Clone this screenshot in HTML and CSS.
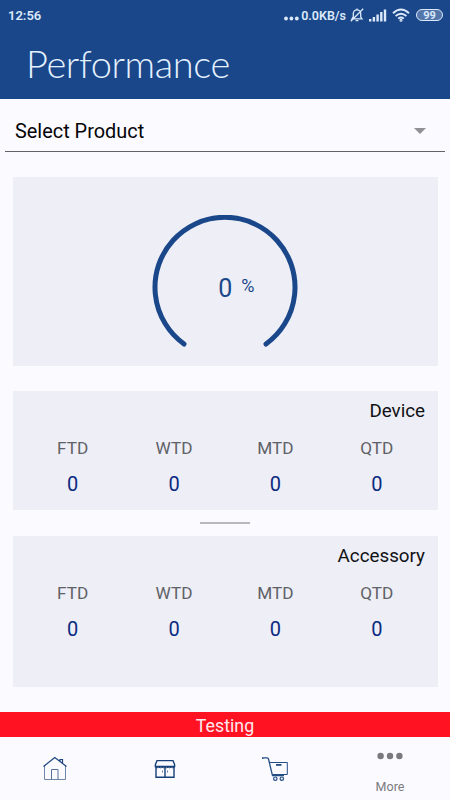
FILE: index.html
```html
<!DOCTYPE html>
<html lang="en">
<head>
<meta charset="utf-8">
<title>Performance</title>
<link rel="stylesheet" href="styles.css">
</head>
<body>
<div class="app">
  <header class="header">
    <div class="status">
      <span class="clock">12:56</span>
      <div class="status-right">
        <svg class="dots" width="15" height="14" viewBox="0 0 15 14" fill="#dce9fa"><circle cx="2" cy="9.500" r="1.900"/><circle cx="7.400" cy="9.500" r="1.900"/><circle cx="12.800" cy="9.500" r="1.900"/></svg>
        <span class="speed">0.0KB/s</span>
        <svg class="bell" width="14" height="14" viewBox="0 0 14 14" fill="none" stroke="#dce9fa" stroke-width="1.300"><path d="M2 10.800h10l-1.300-2V5.600C10.700 3.200 9.200 1.900 7 1.900S3.300 3.200 3.300 5.600v3.200zM7 .6v1.300M5.600 12.600h2.800M.8 13.200L13.200.8"/></svg>
        <svg class="signal" width="18" height="13" viewBox="0 0 18 13" fill="#dce9fa"><path d="M0 10h2.400v2.500H0zM3.700 8h2.400v4.500H3.700zM7.400 5.500h2.400v7H7.400zM11.100 3h2.400v9.500h-2.400zM14.800.5h2.400v12h-2.400z"/></svg>
        <svg class="wifi" width="18" height="14" viewBox="0 0 18 14" fill="none" stroke="#dce9fa" stroke-width="1.900"><path d="M1 5.200Q9-2 17 5.200M3.600 8Q9 3.300 14.400 8M6.200 10.600Q9 8.200 11.800 10.600"/><circle cx="9" cy="12.300" r=".6"/></svg>
        <span class="battery">99</span>
      </div>
    </div>
    <h1 class="title">Performance</h1>
  </header>

  <div class="select">
    <span>Select Product</span>
    <svg width="12" height="6" viewBox="0 0 12 6"><path d="M0 0h12L6 6z" fill="#919195"/></svg>
  </div>

  <section class="card gauge">
    <svg class="arc" width="146" height="136" viewBox="0 0 146 136"><path d="M32 129A70 70 0 1 1 114 129" fill="none" stroke="#1a4789" stroke-width="5" stroke-linecap="round"/></svg>
    <div class="reading"><span class="value">0</span><span class="unit">%</span></div>
  </section>

  <section class="card device">
    <h2>Device</h2>
    <div class="stats">
      <div class="stat"><span>FTD</span><b>0</b></div>
      <div class="stat"><span>WTD</span><b>0</b></div>
      <div class="stat"><span>MTD</span><b>0</b></div>
      <div class="stat"><span>QTD</span><b>0</b></div>
    </div>
  </section>

  <div class="divider"></div>

  <section class="card accessory">
    <h2>Accessory</h2>
    <div class="stats">
      <div class="stat"><span>FTD</span><b>0</b></div>
      <div class="stat"><span>WTD</span><b>0</b></div>
      <div class="stat"><span>MTD</span><b>0</b></div>
      <div class="stat"><span>QTD</span><b>0</b></div>
    </div>
  </section>

  <div class="banner">Testing</div>

  <nav class="nav">
    <a class="tab"><svg width="26" height="26" viewBox="0 0 26 26" fill="none"><path d="M2.500 9.500V23.500H23.500V9.500" stroke="#6f87a8"/><path d="M9.500 23.500V13.500h6.500V23.500" stroke="#52719b"/><path d="M1.500 10.500L12.800 1.500 24.500 10.500M18 5V3.500h2.500V7" stroke="#1c457f" stroke-width="1.200"/></svg></a>
    <a class="tab"><svg width="26" height="26" viewBox="0 0 26 26" fill="none" stroke="#153f78" stroke-width="1.400"><path d="M5 4.600H21L22.600 8.600V10.500H3.400V8.600zM4 11V21.200H22V11M13 11.500V21"/><path d="M3.600 11.200q1.600 1.300 3.100 0q1.600 1.300 3.200 0q1.500 1.300 3.100 0q1.600 1.300 3.100 0q1.600 1.300 3.200 0q1.500 1.300 3.100 0" stroke-width="1"/><path d="M10.500 14.500v2M15.500 14.500v2" stroke-width="1" opacity=".65"/></svg></a>
    <a class="tab"><svg width="28" height="26" viewBox="0 0 28 26" fill="none" stroke="#244d83"><path d="M1.700 3V1.800H6.300Q7.200 1.800 7.500 3L11.500 19.700H23" stroke-width="1.300"/><path d="M8.800 6.500H26.300V18.500H11.500" stroke-width="1"/><path d="M15 8.900h5.500" stroke-width="1.800"/><circle cx="14.300" cy="22.700" r="1.700" stroke-width="1.200"/><circle cx="20.800" cy="22.700" r="1.700" stroke-width="1.200"/></svg></a>
    <a class="tab more"><svg width="26" height="8" viewBox="0 0 26 8" fill="#7a7a7e"><circle cx="3.600" cy="4" r="3.200"/><circle cx="13" cy="4" r="3.200"/><circle cx="22.400" cy="4" r="3.200"/></svg><span>More</span></a>
  </nav>
</div>
</body>
</html>
```

FILE: styles.css
```css
* { box-sizing: border-box; }
body { margin: 0; font-family: Roboto, sans-serif; background: #fbfaff; }
.app { width: 450px; height: 800px; display: flex; flex-direction: column; overflow: hidden; }
.header { height: 99px; flex: none; background: #1a4789; color: #e4f1ff; }
.status { height: 30px; display: flex; align-items: center; justify-content: space-between; padding: 0 7px 0 8px; color: #dce9fa; }
.clock { font-size: 13px; font-weight: 600; line-height: 30px; padding-top: 2px; }
.status-right { display: flex; align-items: center; }
.dots { margin-top: 2px; margin-right: 2px; }
.speed { font-size: 12.5px; font-weight: 600; }
.bell { margin-left: 4px; }
.signal { margin-left: 5px; }
.wifi { margin-left: 5px; }
.battery { width: 27px; height: 12px; margin-left: 6px; border: 1px solid #dce9fa; border-radius: 6px; background: #5377aa; font-size: 11px; line-height: 11px; font-weight: 700; text-align: center; }
.title { margin: 0; padding-left: 26px; font: 300 38px/66px Lato, sans-serif; letter-spacing: -0.38px; }
.select { height: 53px; flex: none; margin: 0 5px; padding: 12px 19px 0 10px; display: flex; justify-content: space-between; align-items: center; border-bottom: 1px solid #626267; font-size: 19.9px; line-height: 24px; color: #050507; }
.select span { padding-top: 2px; }
.card { flex: none; margin: 0 12.5px 0 13px; background: #edeef6; }
.gauge { height: 189px; margin-top: 25px; padding-top: 38px; display: grid; justify-items: center; align-items: start; color: #1a4789; }
.arc, .reading { grid-area: 1 / 1; }
.reading { display: flex; align-items: flex-start; gap: 9px; padding: 58px 0 0 22px; }
.value { font-size: 25px; line-height: 31px; }
.unit { font-size: 18px; line-height: 25px; }
.device { height: 119px; margin-top: 25px; }
.accessory { height: 151px; }
.card h2 { margin: 0; padding: 8px 12.5px 0 0; text-align: right; font-size: 18.8px; line-height: 25px; font-weight: 400; color: #111114; }
.stats { display: grid; grid-template-columns: repeat(4, 1fr); padding: 12px 10px 0 9px; }
.stat { display: flex; flex-direction: column; align-items: center; gap: 12px; }
.stat span { font-size: 17.2px; line-height: 24px; color: #606166; }
.stat b { font-size: 20px; line-height: 24px; font-weight: 400; color: #0a2a80; }
.divider { width: 50px; height: 2px; flex: none; margin: 12px auto; background: #b8b8be; }
.banner { height: 25px; flex: none; margin-top: 25px; background: #ff1322; color: #ffe9ef; font-size: 17.8px; line-height: 27px; text-align: center; }
.nav { flex: 1; display: grid; grid-template-columns: 110px 110px 110px 120px; }
.tab { display: flex; flex-direction: column; align-items: center; padding-top: 19px; }
.more { padding-top: 15px; }
.more span { margin-top: 19px; font-size: 12.5px; line-height: 16px; color: #7b7b80; }
```
